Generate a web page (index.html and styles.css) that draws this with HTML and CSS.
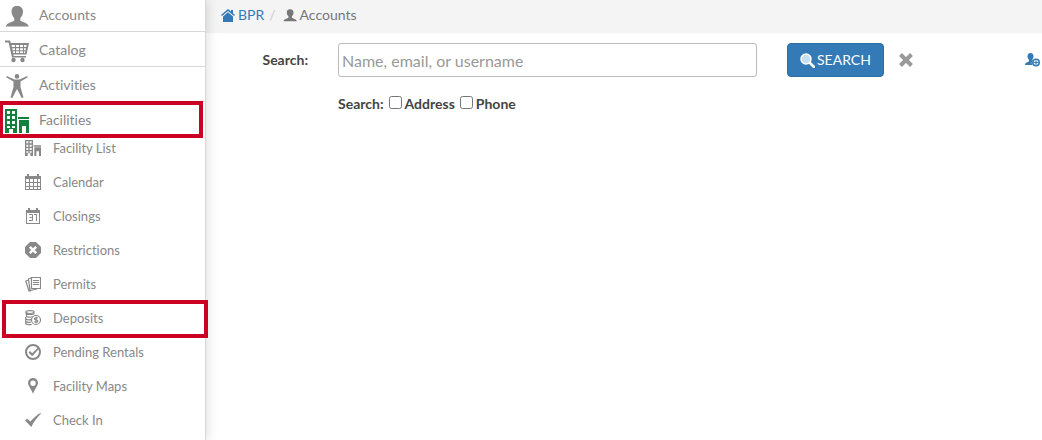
FILE: index.html
```html
<!DOCTYPE html>
<html lang="en">
  <head>
    <meta charset="UTF-8" />
    <meta name="viewport" content="width=device-width, initial-scale=1.0" />
    <title>Accounts</title>
    <link rel="stylesheet" href="styles.css">
  </head>
  <body>
    <!-- shared icons -->
    <svg class="sprite" aria-hidden="true">
      <symbol id="icon-user" viewBox="0 0 24 24">
        <path d="M12 2c-3.600 0-5.400 2-5.400 5.600 0 2.700 1 5 2.700 6.300v2.600c-1.200 1.600-7.500 1.700-8.500 6h23c-1-4.300-7.300-4.400-8.500-6v-2.600c1.700-1.300 2.700-3.600 2.700-6.300C18 4 15.600 2 12 2z" />
      </symbol>
      <symbol id="icon-buildings" viewBox="0 0 24 24">
        <path fill-rule="evenodd" d="M0 0h12v24H8v-4H4v4H0zM2 2v3h3V2zM7 2v3h3V2zM2 7v3h3V7zM7 7v3h3V7zM2 12v3h3v-3zM7 12v3h3v-3zM2 17v2h3v-2zM7 17v2h3v-2z" />
        <path d="M13 8h11v2H13zM14 11h10v13h-3v-7h-4v7h-3z" />
      </symbol>
    </svg>

    <div class="page">
      <nav class="sidebar">
        <ul class="menu">
          <li>
            <a href="#"><svg class="icon"><use href="#icon-user" /></svg>Accounts</a>
          </li>
          <li>
            <a href="#">
              <svg class="icon" viewBox="0 0 24 24">
                <path fill-rule="evenodd" d="M0 1.500h5l.8 2.500H24l-2.500 11.500H8.300l.4 1.500H21v1.500H7L3.600 3.500H0zM6.500 6l.4 2H10V6zM11 6v2h3V6zM15 6v2h3V6zM19 6v2h2.300l.4-2zM7.200 9.200l.4 2H10v-2zM11 9.200v2h3v-2zM15 9.200v2h3v-2zM19 9.200v2h1.600l.4-2zM7.900 12.300l.3 1.700H10v-1.700zM11 12.300V14h3v-1.700zM15 12.300V14h3v-1.700zM19 12.300V14h1l.3-1.700z" />
                <circle cx="8.500" cy="21" r="2.200" /><circle cx="17.500" cy="21" r="2.200" />
              </svg>Catalog</a>
          </li>
          <li>
            <a href="#">
              <svg class="icon" viewBox="0 0 24 24">
                <circle cx="12" cy="2.400" r="2.300" />
                <path d="M1.800 2l7.700 3.500h5L22.200 2l.6 1.300L15.500 7.500v5.500l3 10.500-1.800.5-4.700-9-4.700 9-1.800-.5 3-10.500V7.500L1.200 3.300z" />
              </svg>Activities</a>
          </li>
          <li class="active">
            <a href="#"><svg class="icon"><use href="#icon-buildings" /></svg>Facilities</a>
          </li>
        </ul>

        <ul class="submenu">
          <li>
            <a href="#"><svg class="icon"><use href="#icon-buildings" /></svg>Facility List</a>
          </li>
          <li>
            <a href="#">
              <svg class="icon" viewBox="0 0 16 16">
                <path fill-rule="evenodd" d="M0 2h2V0h2v2h8V0h2v2h2v14H0zM1 5v3h3V5zM5 5v3h3V5zM9 5v3h3V5zM13 5v3h2V5zM1 9v3h3V9zM5 9v3h3V9zM9 9v3h3V9zM13 9v3h2V9zM1 13v2h3v-2zM5 13v2h3v-2zM9 13v2h3v-2zM13 13v2h2v-2z" />
              </svg>Calendar</a>
          </li>
          <li>
            <a href="#">
              <svg class="icon" viewBox="0 0 16 16">
                <path fill-rule="evenodd" d="M1 2h2V0h2v2h6V0h2v2h2v14H1zM2 5v10h12V5z" />
                <path d="M4 6.500h3.500v6H4M4.500 9.500h3M9 6.500h2.500V13" fill="none" stroke="#888" />
              </svg>Closings</a>
          </li>
          <li>
            <a href="#">
              <svg class="icon" viewBox="0 0 16 16">
                <path d="M5 0h6l5 5v6l-5 5H5l-5-5V5z" />
                <path d="M4.800 4.800l6.400 6.400M11.200 4.800l-6.400 6.400" stroke="#fff" stroke-width="2.500" />
              </svg>Restrictions</a>
          </li>
          <li>
            <a href="#">
              <svg class="icon" viewBox="0 0 16 16">
                <path d="M6.500 1.500h9v11h-9zM8 4.500h6M8 6.500h6M8 8.500h6M6 2l-2.500.8L5 14.500l7-1.500M3.500 4L.8 5 4 15h2" fill="none" stroke="#888" stroke-width="1.200" />
              </svg>Permits</a>
          </li>
          <li class="active">
            <a href="#">
              <svg class="icon" viewBox="0 0 16 16">
                <path d="M1 1.500c0-1.200 8-1.200 8 0v2c0 1.200-8 1.200-8 0zM1 2.500c2 1 6 1 8 0M1.500 4.500v2c1 .8 5 1 6.500.3M.7 7v2c1 .8 4 1 5.500.6M.7 9.500v2c1 .8 3.500 1 5 .7M.7 12v1.800c1 .8 4 1 6 .7" fill="none" stroke="#888" stroke-width="1.200" />
                <circle cx="11" cy="10" r="4.500" fill="#fff" stroke="#888" stroke-width="1.200" />
                <path d="M12.800 8.200c-.8-.7-3.400-.7-3.400.5 0 1.600 3.400.9 3.400 2.500 0 1.300-2.700 1.300-3.600.4M11 6.800v6.400" fill="none" stroke="#888" stroke-width="1.200" />
              </svg>Deposits</a>
          </li>
          <li>
            <a href="#">
              <svg class="icon" viewBox="0 0 16 16">
                <circle cx="8" cy="8" r="7" fill="none" stroke="#888" stroke-width="2" />
                <path d="M3.500 8.500L5 7l2.200 2.200L13 3.500l1 1.300-6.800 7.400z" />
              </svg>Pending Rentals</a>
          </li>
          <li>
            <a href="#">
              <svg class="icon" viewBox="0 0 16 16">
                <path fill-rule="evenodd" d="M8 0a5 5 0 0 0-5 5c0 3 3.200 5.500 5 11 1.800-5.500 5-8 5-11a5 5 0 0 0-5-5zM8 2.500a2.700 2.700 0 1 1 0 5.400 2.700 2.700 0 0 1 0-5.400z" />
              </svg>Facility Maps</a>
          </li>
          <li>
            <a href="#">
              <svg class="icon" viewBox="0 0 16 16">
                <path d="M0 8.500l2-1.700 3.500 2.700C8 6.500 11.500 3 15.300 1l.7.800C12 5.500 9 9.500 6.300 15z" />
              </svg>Check In</a>
          </li>
        </ul>
      </nav>

      <main class="content">
        <nav class="breadcrumb">
          <a href="#">
            <svg class="crumb-icon" viewBox="0 0 14 14">
              <path d="M7 1L0 7l1 1 6-5 6 5 1-1-2-1.700V2h-2v1.600zM7 4.300L2 8.500V14h10V8.500z" />
            </svg>BPR</a>
          <span class="divider">/</span>
          <span class="current"><svg class="crumb-icon"><use href="#icon-user" /></svg>Accounts</span>
        </nav>

        <form class="search">
          <label class="search-label" for="query">Search:</label>
          <div class="search-fields">
            <input type="text" id="query" class="query" placeholder="Name, email, or username" />
            <div class="options">
              <span>Search:</span>
              <label><input type="checkbox" />Address</label>
              <label><input type="checkbox" />Phone</label>
            </div>
          </div>
          <div class="actions">
            <button type="button" class="search-btn">
              <svg viewBox="0 0 15 15">
                <path d="M10 10l4 4" stroke="#fff" stroke-width="2.500" stroke-linecap="round" />
                <circle cx="6" cy="6" r="5" fill="#c9dff2" stroke="#fff" stroke-width="1.500" />
              </svg>SEARCH
            </button>
            <button type="button" class="icon-btn clear" aria-label="Clear">
              <svg viewBox="0 0 14 14"><path d="M1.500 1.500l11 11M12.500 1.500l-11 11" stroke="#999" stroke-width="4" /></svg>
            </button>
            <button type="button" class="icon-btn add-user" aria-label="Add account">
              <svg viewBox="0 0 15 14">
                <path d="M5.500 0C3.500 0 2.500 1.300 2.500 3.300c0 1.500.5 2.700 1.500 3.500v1.400C3 9.300.3 9 0 12h7.500a4 4 0 0 1 .5-5l-1-.2c1-.8 1.500-2 1.500-3.500C8.500 1.300 7.500 0 5.500 0z" />
                <circle cx="11" cy="9.500" r="3.200" fill="#fff" stroke="#337ab7" stroke-width="1.600" />
                <path d="M11 7.500v4M9 9.500h4" stroke="#337ab7" stroke-width="1.200" />
              </svg>
            </button>
          </div>
        </form>
      </main>
    </div>
  </body>
</html>
```
FILE: styles.css
```css
* {
  box-sizing: border-box;
}

body {
  margin: 0;
  font-family: Lato, "Liberation Sans", sans-serif;
  font-size: 14px;
  font-variant-ligatures: none;
  line-height: 20px;
  color: #444;
  background: #fff;
  overflow: hidden;
}

a {
  color: #337ab7;
  text-decoration: none;
}

ul {
  list-style: none;
  margin: 0;
  padding: 0;
}

svg {
  fill: currentColor;
  flex: none;
}

.sprite {
  position: absolute;
  width: 0;
  height: 0;
}

.page {
  display: flex;
  min-height: 100vh;
}

/* sidebar */
.sidebar {
  position: relative;
  z-index: 1;
  width: 206px;
  flex: none;
  background: #fff;
  border-right: 1px solid #d8d8d8;
  box-shadow: 2px 0 10px rgba(0, 0, 0, 0.12);
}

.sidebar li {
  position: relative;
}

.sidebar a {
  display: flex;
  align-items: center;
  color: #888;
}

.menu {
  margin-top: -3px;
}

.menu li {
  height: 35px;
  border-bottom: 1px solid #d8d8d8;
}

.menu a {
  height: 34px;
  padding: 2px 0 0 5px;
  gap: 10px;
}

.menu .icon {
  width: 24px;
  height: 24px;
  margin-top: 2px;
}

.menu .active {
  border-bottom: 0;
}

.menu .active .icon {
  color: #15803d;
}

.submenu {
  margin-top: -6px;
  font-size: 13px;
}

.submenu a {
  height: 34px;
  padding-left: 25px;
  gap: 12px;
}

.submenu .icon {
  width: 16px;
  height: 16px;
}

.sidebar .active::after {
  content: "";
  position: absolute;
  inset: -1px 2px -1px -1px;
  border: 4px solid #cc0022;
  pointer-events: none;
}

.submenu .active::after {
  inset: -1px -3px -3px 2px;
}

/* main */
.content {
  flex: 1;
  min-width: 0;
}

.breadcrumb {
  display: flex;
  align-items: center;
  height: 33px;
  padding: 0 15px 3px;
  background: #f4f4f4;
}

.breadcrumb a,
.current {
  display: flex;
  align-items: center;
  gap: 3px;
}

.current {
  color: #777;
}

.crumb-icon {
  width: 14px;
  height: 14px;
}

.divider {
  padding: 0 7px 0 5px;
  color: #ccc;
}

.search {
  display: flex;
  padding-top: 10px;
}

.search-label {
  width: 132px;
  padding: 7px 30px 0 0;
  text-align: right;
}

.search-label,
.options {
  font-weight: bold;
}

.search-fields {
  flex: 1;
}

.query {
  display: block;
  width: 100%;
  height: 34px;
  padding: 2px 3px;
  border: 1px solid #bbb;
  border-radius: 3px;
  font: 16px Lato, "Liberation Sans", sans-serif;
}

.query::placeholder {
  color: #999;
}

.options {
  display: flex;
  gap: 5px;
  margin-top: 17px;
}

.options label {
  display: flex;
  gap: 3px;
}

.options input {
  width: 13px;
  height: 13px;
  margin: 2px 0 0;
}

.actions {
  display: flex;
  align-items: center;
  width: 285px;
  height: 34px;
  padding-left: 30px;
}

button {
  display: flex;
  align-items: center;
  font: inherit;
  cursor: pointer;
}

.search-btn {
  height: 34px;
  padding: 0 12px;
  gap: 2px;
  color: #fff;
  background: #337ab7;
  border: 1px solid #2e6da4;
  border-radius: 4px;
}

.search-btn svg {
  width: 15px;
  height: 15px;
}

.icon-btn {
  padding: 0;
  border: 0;
  background: none;
}

.clear {
  margin-left: 15px;
}

.clear svg {
  width: 14px;
  height: 14px;
}

.add-user {
  margin: 0 2px 0 auto;
  color: #337ab7;
}

.add-user svg {
  width: 15px;
  height: 14px;
}
```
